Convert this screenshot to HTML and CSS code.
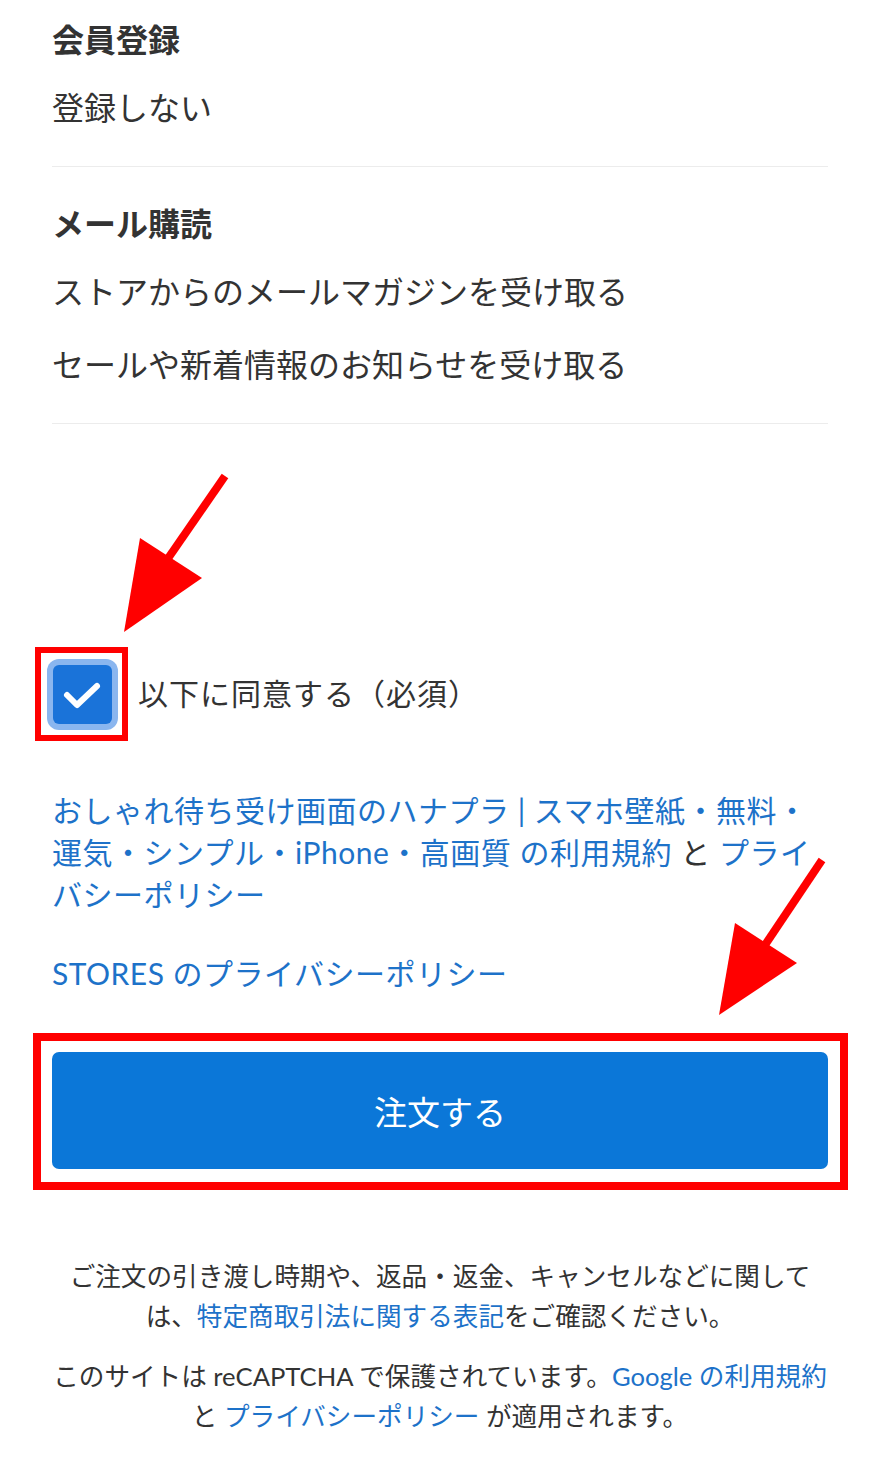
FILE: index.html
```html
<!DOCTYPE html>
<html lang="ja">
<head>
<meta charset="utf-8">
<title>注文</title>
<link rel="stylesheet" href="styles.css">
</head>
<body>
<main class="page">
  <section class="group">
    <h2 class="group-title">会員登録</h2>
    <ul class="options">
      <li>登録しない</li>
    </ul>
  </section>
  <section class="group">
    <h2 class="group-title">メール購読</h2>
    <ul class="options">
      <li>ストアからのメールマガジンを受け取る</li>
      <li>セールや新着情報のお知らせを受け取る</li>
    </ul>
  </section>

  <label class="agree">
    <span class="checkbox">
      <svg viewBox="0 0 59 59" width="59" height="59"><path d="M14 30 L24 40 L44 21" fill="none" stroke="#fff" stroke-width="6" stroke-linecap="round" stroke-linejoin="round"/></svg>
    </span>
    <span class="agree-text">以下に同意する（必須）</span>
  </label>

  <p class="terms"><a href="#">おしゃれ待ち受け画面のハナプラ | スマホ壁紙・無料・運気・シンプル・iPhone・高画質 の利用規約</a> と <a href="#">プライバシーポリシー</a></p>
  <p class="terms stores"><a href="#">STORES のプライバシーポリシー</a></p>

  <button class="order">注文する</button>

  <p class="note">ご注文の引き渡し時期や、返品・返金、キャンセルなどに関して<br>は、<a href="#">特定商取引法に関する表記</a>をご確認ください。</p>
  <p class="note">このサイトは reCAPTCHA で保護されています。<a href="#">Google の利用規約</a><br>と <a href="#">プライバシーポリシー</a> が適用されます。</p>
</main>

<svg class="annotations" width="878" height="1475" viewBox="0 0 878 1475">
  <line x1="225" y1="476" x2="160" y2="570" stroke="#f00" stroke-width="8"/>
  <polygon points="140,538 202,578 124,632" fill="#f00"/>
  <line x1="822" y1="860" x2="765" y2="945" stroke="#f00" stroke-width="8"/>
  <polygon points="735,923 797,963 719,1015" fill="#f00"/>
</svg>
</body>
</html>
```

FILE: styles.css
```css
* { box-sizing: border-box; }
html, body { margin: 0; padding: 0; background: #fff; }
body {
  position: relative;
  width: 878px;
  min-height: 1475px;
  font-family: Lato, "Noto Sans CJK JP", sans-serif;
  color: #333;
}
.page {
  padding: 16px 50px 40px 52px;
  display: flex;
  flex-direction: column;
}
.group {
  border-bottom: 1px solid #ececec;
  padding-bottom: 34px;
  margin-bottom: 33px;
}
.group-title {
  margin: 0 0 20px;
  font-size: 32px;
  line-height: 48px;
  font-weight: 700;
}
.options {
  list-style: none;
  margin: 0;
  padding: 0;
  display: flex;
  flex-direction: column;
  gap: 25px;
  font-size: 32px;
  line-height: 48px;
}
.agree {
  display: flex;
  align-items: center;
  gap: 26px;
  margin-top: 208px;
  padding-left: 1px;
}
.checkbox {
  position: relative;
  width: 59px;
  height: 59px;
  flex: none;
  display: block;
  background: #1a73d9;
  border-radius: 6px;
  box-shadow: 0 0 0 6px #8ab6ef;
}
.checkbox::after {
  content: "";
  position: absolute;
  left: -18px;
  right: -16px;
  top: -18px;
  bottom: -17px;
  border: 6px solid #f00;
}
.checkbox svg { display: block; }
.agree-text {
  font-size: 30px;
  line-height: 42px;
  letter-spacing: 1px;
  margin-top: -3px;
}
.terms {
  margin: 65px 0 0;
  font-size: 30px;
  line-height: 42px;
  letter-spacing: 0.5px;
}
.terms.stores { margin-top: 37px; }
a { color: #1d72c9; text-decoration: none; }
.order {
  position: relative;
  margin-top: 58px;
  height: 117px;
  width: 100%;
  border: none;
  border-radius: 7px;
  background: #0b77d8;
  color: #fff;
  font-family: inherit;
  font-size: 33px;
}
.order::after {
  content: "";
  position: absolute;
  left: -19px;
  right: -20px;
  top: -19px;
  bottom: -21px;
  border: 8px solid #f00;
}
.note {
  margin: 87px 0 0;
  text-align: center;
  font-size: 25.6px;
  line-height: 40px;
}
.note + .note { margin-top: 20px; }
.annotations {
  position: absolute;
  top: 0;
  left: 0;
  pointer-events: none;
}
```
